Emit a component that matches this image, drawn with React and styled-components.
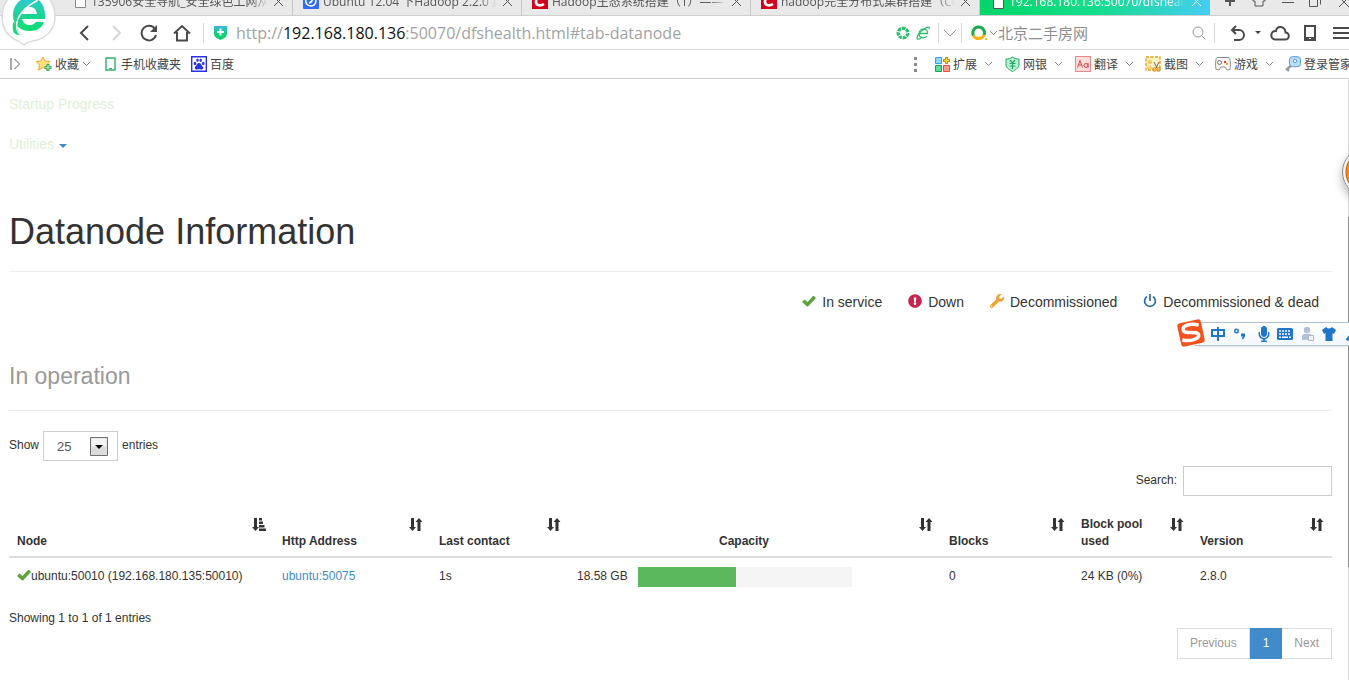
import React from 'react';
import styled, { createGlobalStyle, css } from 'styled-components';
import {
  FaExclamationCircle, FaWrench, FaMicrophone, FaTshirt, FaPaw,
} from 'react-icons/fa';

const uiFont = '"Open Sans", "Noto Sans CJK SC", sans-serif';
const pageFont = '"Liberation Sans", Arial, sans-serif';

const GlobalStyle = createGlobalStyle`
  *, *::before, *::after { box-sizing: border-box; }
  body { margin: 0; background: #fff; overflow: hidden; }
  button, input, select { font: inherit; color: inherit; margin: 0; }
  svg { display: block; flex: none; }
`;

const Window = styled.div`
  position: relative;
  display: flex;
  flex-direction: column;
  min-height: 100vh;
  overflow: hidden;
`;

const PlainButton = styled.button`
  display: flex;
  align-items: center;
  justify-content: center;
  flex: none;
  padding: 0;
  border: 0;
  background: none;
`;

/* ---------- browser chrome ---------- */

const Chrome = styled.header`
  font-family: ${uiFont};
  color: #555;
`;

const TabStrip = styled.div`
  display: flex;
  align-items: flex-end;
  height: 16px;
  padding-left: 64px;
  overflow: hidden;
  background: #e9e9e9;
  border-bottom: 1px solid #cfcfcf;
`;

const Tab = styled.div`
  display: flex;
  align-items: center;
  flex: 0 1 229px;
  min-width: 0;
  height: 28px;
  padding: 0 8px 0 10px;
  border-right: 1px solid #c8c8c8;
  font-size: 12px;
  ${(p) => p.$active && css`
    height: 29px;
    flex-basis: 230px;
    margin-bottom: -1px;
    padding-left: 12px;
    border: 0;
    color: #fff;
    background: linear-gradient(90deg, #05d568 0%, #14dd8a 50%, #45cdf3 100%);
  `}
`;

const TabTitle = styled.span`
  flex: 1;
  min-width: 0;
  margin: 0 5px 0 4px;
  overflow: hidden;
  white-space: nowrap;
  mask-image: linear-gradient(90deg, #000 90%, transparent);
`;

const WindowButtons = styled.div`
  display: flex;
  align-items: center;
  flex: 1;
  justify-content: space-between;
  height: 28px;
  padding: 0 0 0 14px;
`;

const Toolbar = styled.div`
  display: flex;
  align-items: center;
  height: 34px;
  padding-left: 67px;
  border-bottom: 1px solid #dcdcdc;
`;

const ToolButton = styled(PlainButton)`
  width: ${(p) => p.$w || 33}px;
  height: 32px;
`;

const Separator = styled.span`
  flex: none;
  width: 1px;
  height: 20px;
  margin-left: ${(p) => p.$gap || 0}px;
  background: #d9d9d9;
`;

const Address = styled.div`
  display: flex;
  align-items: center;
  flex: 1;
  min-width: 0;
  gap: 6px;
  padding: 0 8px 0 10px;
  white-space: nowrap;
`;

const Url = styled.span`
  flex: 1;
  min-width: 0;
  padding-left: 3px;
  overflow: hidden;
  font-size: 16px;
  line-height: 24px;
  color: #a3a3a3;
  b { font-weight: 400; color: #111; }
`;

const SearchBox = styled.form`
  display: flex;
  align-items: center;
  flex: 0 0 252px;
  min-width: 0;
  padding: 0 8px 0 9px;
`;

const SearchField = styled.input`
  flex: 1;
  min-width: 0;
  padding: 0;
  border: 0;
  background: none;
  font-size: 15px;
  line-height: 24px;
  &::placeholder { color: #8f8f8f; opacity: 1; }
`;

const Tools = styled.div`
  display: flex;
  flex: 0 0 134px;
  padding-left: 7px;
  overflow: hidden;
`;

const Bookmarks = styled.nav`
  display: flex;
  align-items: center;
  height: 29px;
  padding-left: 10px;
  border-bottom: 1px solid #cfcfcf;
  font-size: 12px;
  color: #444;
`;

const Bookmark = styled.a`
  display: flex;
  align-items: center;
  flex: none;
  gap: 3px;
  margin-left: ${(p) => p.$gap || 0}px;
  color: inherit;
  line-height: 18px;
  text-decoration: none;
  white-space: nowrap;
`;

const BookmarkLabel = styled.span`
  padding-top: 2px;
`;

const Extensions = styled.div`
  display: flex;
  flex: 0 0 414px;
  overflow: hidden;
`;

const Extension = styled(PlainButton)`
  justify-content: flex-start;
  width: 70px;
  gap: 3px;
  line-height: 18px;
  white-space: nowrap;
  svg:last-child { margin-left: 4px; }
`;

const DotsHandle = styled.span`
  margin: 0 17px 0 auto;
`;

const LogoBadge = styled.div`
  position: absolute;
  top: 0;
  left: 0;
`;

/* ---------- page ---------- */

const Viewport = styled.div`
  display: flex;
  flex: 1;
  font-family: ${pageFont};
  font-size: 12px;
  line-height: 17px;
  color: #333;
`;

const Page = styled.main`
  flex: 1;
  min-width: 0;
  padding: 5px 16px 0 9px;
`;

const ScrollTrack = styled.div`
  flex: none;
  width: 1px;
  padding-top: 138px;
  background: #dcdcdc;
`;

const ScrollThumb = styled.div`
  height: 350px;
  background: #8c8c8c;
`;

const NavLink = styled.a`
  display: flex;
  align-items: center;
  gap: 5px;
  height: 40px;
  font-size: 14px;
  line-height: 20px;
  color: #dff0d8;
  text-decoration: none;
  svg { margin-top: 4px; }
`;

const Title = styled.h1`
  margin: 48px 0 20px;
  padding-bottom: 19px;
  border-bottom: 1px solid #eee;
  font-size: 36px;
  font-weight: 400;
  line-height: 40px;
`;

const Subtitle = styled.h2`
  margin: 51px 0 20px;
  padding-bottom: 21px;
  border-bottom: 1px solid #eee;
  font-size: 23px;
  font-weight: 400;
  line-height: 26px;
  color: #999;
`;

const Legend = styled.ul`
  display: flex;
  justify-content: flex-end;
  gap: 26px;
  margin: 0;
  padding: 0 13px 0 0;
  list-style: none;
  font-size: 14px;
  line-height: 20px;
`;

const LegendItem = styled.li`
  display: flex;
  align-items: center;
  gap: 6px;
  svg { margin-bottom: 2px; color: ${(p) => p.$color}; }
`;

const LengthControl = styled.label`
  display: flex;
  align-items: center;
  gap: 4px;
`;

const SelectBox = styled.span`
  position: relative;
  svg {
    position: absolute;
    top: 6px;
    right: 10px;
    pointer-events: none;
  }
`;

const Select = styled.select`
  display: block;
  width: 75px;
  height: 30px;
  padding: 0 0 0 13px;
  appearance: none;
  border: 1px solid #ccc;
  border-radius: 0;
  background: #fff;
  font-size: 13px;
  color: #555;
`;

const ControlLabel = styled.span`
  padding-bottom: 2px;
`;

const FilterControl = styled.label`
  display: flex;
  align-items: center;
  justify-content: flex-end;
  gap: 6px;
  margin: 5px 0 12px;
`;

const FilterInput = styled.input`
  width: 149px;
  height: 30px;
  padding: 4px 8px;
  border: 1px solid #ccc;
  background: #fff;
`;

const Table = styled.table`
  width: 100%;
  table-layout: fixed;
  border-collapse: collapse;
`;

const Column = styled.col`
  width: ${(p) => (p.$w ? `${p.$w}px` : 'auto')};
`;

const HeadCell = styled.th`
  padding: 8px 8px 6px 8px;
  border-bottom: 2px solid #ddd;
`;

const SortButton = styled.button`
  display: flex;
  gap: 8px;
  width: 100%;
  min-height: 34px;
  padding: 0;
  border: 0;
  background: none;
  font-weight: 700;
  line-height: 17px;
  text-align: ${(p) => (p.$center ? 'center' : 'left')};
  span { flex: 1; align-self: flex-end; }
  svg { margin-top: 2px; }
`;

const Cell = styled.td`
  height: 38px;
  padding: 0 0 0 8px;
  white-space: nowrap;
`;

const NodeName = styled.span`
  display: flex;
  align-items: center;
  svg { margin-bottom: 4px; color: #5fa341; }
`;

const Link = styled.a`
  color: #428bca;
  text-decoration: none;
`;

const Capacity = styled.div`
  display: flex;
  align-items: center;
  gap: 10px;
`;

const Meter = styled.div`
  width: 214px;
  height: 20px;
  background: #f5f5f5;
`;

const MeterFill = styled.div`
  height: 100%;
  background: #5cb85c;
`;

const Info = styled.p`
  margin: 15px 0 1px;
`;

const Pager = styled.nav`
  display: flex;
  justify-content: flex-end;
`;

const PageButton = styled.button`
  height: 31px;
  padding: 0 12px;
  border: 1px solid #ddd;
  background: #fff;
  color: #999;
  & + & { border-left: 0; }
  ${(p) => p.$current && css`
    && { border: 1px solid #428bca; }
    background: #428bca;
    color: #fff;
  `}
`;

/* ---------- floating desktop widgets ---------- */

const FloatBall = styled.div`
  position: absolute;
  top: 147px;
  right: -43px;
  width: 50px;
  height: 50px;
  border: 1px solid #8a8a8a;
  border-radius: 50%;
  background: radial-gradient(circle, #ff8a14 20px, #b8641c 21px, #f3f3f3 22px);
  box-shadow: 0 5px 10px rgba(0, 0, 0, 0.3);
`;

const InputBar = styled.div`
  position: absolute;
  top: 322px;
  right: 0;
  display: flex;
  align-items: center;
  width: 154px;
  height: 24px;
  padding-left: 16px;
  border: solid #b3c2d1;
  border-width: 1px 0;
  background: linear-gradient(#fff, #f3f8fd);
  box-shadow: 0 1px 3px rgba(0, 0, 0, 0.12);
`;

const InputBarTools = styled.div`
  display: flex;
  align-items: center;
  overflow: hidden;
  color: #1f75c8;
`;

const InputLogo = styled.div`
  position: absolute;
  top: -5px;
  left: -19px;
`;

/* ---------- icons ---------- */

const Line = ({ w = 16, h = w, sw = 1, color = 'currentColor', d }) => (
  <svg width={w} height={h} viewBox={`0 0 ${w} ${h}`} fill="none" stroke={color} strokeWidth={sw}>
    <path d={d} />
  </svg>
);

const Chevron = ({ color = '#888' }) => <Line w={9} h={6} color={color} d="M1 1l3.5 3.5L8 1" />;
const CloseMark = () => <Line w={11} d="M1 1l9 9M10 1l-9 9" />;

const BrowserLogo = () => (
  <svg width="60" height="50" viewBox="0 0 60 50" fill="none">
    <defs>
      <linearGradient id="logo" gradientUnits="userSpaceOnUse" x1="0" y1="-3" x2="0" y2="36">
        <stop offset="0" stopColor="#35c6d6" />
        <stop offset="0.5" stopColor="#18d690" />
        <stop offset="1" stopColor="#10e068" />
      </linearGradient>
    </defs>
    <path
      d="M29-11C14-11 2 1 2 17c0 11 6 19 14 23 3 1 5 3 8 5 2-2 4-3 8-4 13-1 23-11 23-24C55 1 44-11 29-11z"
      fill="#fff" stroke="#dcdcdc" strokeWidth="1.5"
    />
    <path
      fill="url(#logo)" fillRule="evenodd"
      d="M45 19C46 5 39-3 30-3S13 5 13 15s7 16 17 16c7 0 12-3 14-9h-8c-2 2-3 3-6 3-4 0-7-2-8-6zM22 14c1-5 4-7 8-7s6 2 7 7z"
    />
    <path d="M36-2C22 5 13 15 14 31h4C14 19 22 8 36 0z" fill="url(#logo)" />
    <path d="M38 0C25 7 14 17 17 31" stroke="#fff" strokeWidth="1.5" />
    <path d="M13 22c-1 8 0 14 8 13-4-1-5-5-5-10z" fill="url(#logo)" />
  </svg>
);

const PageIcon = ({ color = '#8a8a8a' }) => (
  <svg width="13" height="14" viewBox="0 0 13 14">
    <path d="M1.5.5h10v13h-10z" fill="#fff" stroke={color} />
  </svg>
);

const CsdnIcon = () => (
  <svg width="16" height="16" viewBox="0 0 16 16">
    <path d="M0 0h16v16H0z" fill="#d0021b" />
    <path d="M12 5C6 2 4 6 4 9c0 4 5 4 8 2" fill="none" stroke="#fff" strokeWidth="2.6" />
  </svg>
);

const SwirlIcon = () => (
  <svg width="16" height="16" viewBox="0 0 16 16" fill="none">
    <rect width="16" height="16" rx="1" fill="#2f6bf0" />
    <path d="M3 5c-1 5 1 8 5 8s6-4 4-8M7 5c3 0 3 4-1 5" stroke="#fff" strokeWidth="1.6" />
  </svg>
);

const ShieldPlus = () => (
  <svg width="13" height="15" viewBox="0 0 13 15">
    <defs>
      <linearGradient id="shield" x1="0" y1="0" x2="0" y2="1">
        <stop offset="0" stopColor="#37b9e3" />
        <stop offset="0.6" stopColor="#10cf70" />
      </linearGradient>
    </defs>
    <path d="M0 1h13v8c0 3-4 5-6.5 6C4 14 0 12 0 9z" fill="url(#shield)" />
    <path d="M6.500 3.500v7M3 7h7" stroke="#fff" strokeWidth="2" />
  </svg>
);

const Aperture = () => (
  <svg width="14" height="14" viewBox="0 0 14 14" fill="none" stroke="#2fbf6b">
    <circle cx="7" cy="7" r="4.8" strokeWidth="3.4" />
    <path d="M5 0l1 5M11 1L8.500 5M14 6L9 7.500M12 12L8.500 9M6 14l.5-5M1 11l4.500-2.500M0 5l5 1.500" stroke="#fff" />
  </svg>
);

const SmallE = () => (
  <svg width="14" height="14" viewBox="0 0 14 14" fill="none" stroke="#2fbf6b" strokeWidth="1.3">
    <path d="M3.500 7.500h8C12 4.500 10 3 7.500 3 4.500 3 3 5.500 3 8c0 4 6 5 8 2" />
    <path d="M13 3c1-3-2-2-5 0C4 5.500 1 10 1 12c0 2 3 1 4 0" />
  </svg>
);

const RingLogo = () => (
  <svg width="18" height="16" viewBox="0 0 18 16" fill="none" strokeWidth="3">
    <path d="M2.500 10.500A5.800 5.800 0 1 1 13 10" stroke="#1aa94c" />
    <path d="M2.500 10.500A5.800 5.800 0 0 0 13 10" stroke="#f7b512" />
    <path d="M14 14h2" stroke="#f7b512" strokeWidth="2" />
  </svg>
);

const StarIcon = () => (
  <svg width="16" height="16" viewBox="0 0 16 16">
    <path d="M7 1l2 4 5 .5-3.500 3.500 1 5L7 11.500 2.500 14l1-5L0 5.500 5 5z" fill="#ffe07a" stroke="#eda93a" />
    <path d="M12 8v7M8.500 11.500h7" stroke="#3fae63" strokeWidth="3" />
    <path d="M12 9v5M9.500 11.500h5" stroke="#a9e6bd" />
  </svg>
);

const BaiduIcon = () => (
  <svg width="16" height="16" viewBox="0 0 16 16" fill="none">
    <path d="M.7.7h14.600v14.600H.7z" fill="#fff" stroke="#2932e1" strokeWidth="1.4" />
    <g fill="#2932e1">
      <ellipse cx="4" cy="7.500" rx="1.300" ry="1.700" />
      <ellipse cx="6.500" cy="4.200" rx="1.200" ry="1.700" />
      <ellipse cx="9.700" cy="4.200" rx="1.200" ry="1.700" />
      <ellipse cx="12.200" cy="7.500" rx="1.300" ry="1.700" />
      <path d="M8 7c2 0 2 2 3.500 3.300 1.500 1.500.5 3.400-1.500 3.200-1.500-.3-2.500-.3-4 0-2 .2-3-1.700-1.500-3.200C6 9 6 7 8 7z" />
    </g>
  </svg>
);

const ExtendIcon = () => (
  <svg width="15" height="15" viewBox="0 0 15 15">
    <path d="M.5.5h6v6h-6z" fill="#8fd6f8" stroke="#3a9ff0" />
    <path d="M.5 8.500h6v6h-6z" fill="#5ede9a" stroke="#16a04e" />
    <path d="M8.500 8.500h6v6h-6z" fill="#ff9c90" stroke="#ee4b41" />
    <path d="M11.500 0v7M8 3.500h7" stroke="#d98a0b" strokeWidth="3" />
    <path d="M11.500 1v5M9 3.500h5" stroke="#ffdf3d" />
  </svg>
);

const BankIcon = () => (
  <svg width="15" height="16" viewBox="0 0 15 16" fill="none" stroke="#25a767">
    <path d="M7.500 1c2 1.500 4 2 6.500 2v6c0 3-4 5-6.500 6.500C5 14 1 12 1 9V3c2.500 0 4.500-.5 6.500-2z" fill="#b8f4d2" />
    <path d="M5 4l2.500 3L10 4M7.500 7v6M4.500 7.500h6M4.500 10h6" strokeWidth="1.2" />
  </svg>
);

const TranslateIcon = () => (
  <svg width="16" height="16" viewBox="0 0 16 16" fill="none" stroke="#d5484d">
    <rect x="0.5" y="0.5" width="15" height="15" fill="#fddcda" stroke="#e58a88" />
    <path d="M2.500 11.500L5 4.500l2.500 7M3.500 9h3M13 7v5" />
    <circle cx="11" cy="9.500" r="2" />
  </svg>
);

const CaptureIcon = () => (
  <svg width="16" height="16" viewBox="0 0 16 16" fill="none">
    <path d="M1 1h14v13H1z" fill="#fff3c8" stroke="#eb9d1b" strokeWidth="1.4" strokeDasharray="3 1.5" />
    <circle cx="5" cy="6" r="2" fill="#f6c84c" />
    <path d="M1 13c1-5 6-5 7 0z" fill="#f6d27a" />
    <path d="M9 6l3 6M14 6l-3 6" stroke="#7c6a4a" />
    <circle cx="9.500" cy="13.500" r="1.800" stroke="#d9820f" />
    <circle cx="13.500" cy="13.500" r="1.800" stroke="#d9820f" />
  </svg>
);

const GameIcon = () => (
  <svg width="16" height="14" viewBox="0 0 16 14" fill="none">
    <path d="M2 .5h12c2 2 1.500 9 1 12l-3 .5-2-3H6l-2 3-3-.5C.5 9.500 0 2.500 2 .5z" fill="#f5f5f5" stroke="#8d8d8d" />
    <circle cx="4.500" cy="5.500" r="2" stroke="#777" />
    <path d="M9 4h2v2H9z" fill="#e33" />
    <path d="M11 6h2v2h-2z" fill="#f3a512" />
  </svg>
);

const KeyIcon = () => (
  <svg width="16" height="16" viewBox="0 0 16 16" fill="none">
    <path d="M7 9l-6 5M2 13l2 2" stroke="#999" strokeWidth="2.4" />
    <rect x="4.500" y="0.700" width="11" height="10" rx="3" fill="#b8e0fb" stroke="#5b98cf" />
    <circle cx="10" cy="5" r="1.700" fill="#fff" stroke="#5b98cf" />
  </svg>
);

const CheckIcon = () => (
  <svg width="14" height="12" viewBox="0 0 14 12">
    <path d="M0 7l2.500-2.500L5.500 7l5.500-6h1l2 2-8 8.500H5z" fill="currentColor" />
  </svg>
);

const PowerIcon = () => (
  <svg width="14" height="14" viewBox="0 0 14 14" fill="none" stroke="currentColor" strokeWidth="1.7">
    <path d="M4 2.500a5.400 5.400 0 1 0 6 0M7 0v7" />
  </svg>
);

const SortBoth = () => (
  <svg width="14" height="13" viewBox="0 0 14 13" fill="#333">
    <path d="M2 0h3v9h2l-3.500 4L0 9h2z" />
    <path d="M8.500 13h3V4h2L10 0 6.500 4h2z" />
  </svg>
);

const SortAscending = () => (
  <svg width="14" height="13" viewBox="0 0 14 13" fill="#333">
    <path d="M2 0h3v9h2l-3.500 4L0 9h2z" />
    <path d="M7 0h3v2.500H7zM7 3.500h4V6H7zM7 7h5.500v2.500H7zM7 10.500h7V13H7z" />
  </svg>
);

const DropArrow = () => (
  <svg width="18" height="19" viewBox="0 0 18 19">
    <path d="M.5.5h17v18H.5z" fill="#dcdcdc" stroke="#6f6f6f" />
    <path d="M1.500 1.500h15v8h-15z" fill="#f4f4f4" />
    <path d="M5 8h8l-4 4z" fill="#000" />
  </svg>
);

const extensions = [
  ['扩展', ExtendIcon], ['网银', BankIcon], ['翻译', TranslateIcon],
  ['截图', CaptureIcon], ['游戏', GameIcon], ['登录管家', KeyIcon],
];

const tabs = [
  ['135906安全导航_安全绿色上网从', PageIcon],
  ['Ubuntu 12.04 下Hadoop 2.2.0 集群', SwirlIcon],
  ['Hadoop生态系统搭建（1）——', CsdnIcon],
  ['hadoop完全分布式集群搭建（Ce', CsdnIcon],
];

const columns = [
  { label: 'Node', width: 265 },
  { label: 'Http Address', width: 157 },
  { label: 'Last contact', width: 138 },
  { label: 'Capacity' },
  { label: 'Blocks', width: 132 },
  { label: 'Block pool used', width: 119 },
  { label: 'Version', width: 140 },
];

const nodes = [
  {
    name: 'ubuntu:50010 (192.168.180.135:50010)', http: 'ubuntu:50075', contact: '1s',
    capacity: '18.58 GB', used: 46, blocks: '0', pool: '24 KB (0%)', version: '2.8.0',
  },
];

function BrowserChrome() {
  return (
    <Chrome>
      <TabStrip>
        {tabs.map(([title, Icon]) => (
          <Tab key={title}>
            <Icon />
            <TabTitle>{title}</TabTitle>
            <PlainButton aria-label="Close tab"><CloseMark /></PlainButton>
          </Tab>
        ))}
        <Tab $active>
          <PageIcon color="#555" />
          <TabTitle>192.168.180.136:50070/dfshealth</TabTitle>
          <PlainButton aria-label="Close tab"><CloseMark /></PlainButton>
        </Tab>
        <WindowButtons>
          <PlainButton aria-label="New tab"><Line w={12} sw={2} d="M6 1v10M1 6h10" /></PlainButton>
          <PlainButton aria-label="Skin"><Line w={14} d="M4 1L1 4v3h2v5h8V7h2V4l-3-3" /></PlainButton>
          <PlainButton aria-label="Minimize"><Line w={12} h={6} d="M0 4.500h12" /></PlainButton>
          <PlainButton aria-label="Restore"><Line w={13} d="M.5 3.500h8v8h-8zM3 1.500h8.500v8" /></PlainButton>
          <PlainButton aria-label="Close"><Line w={11} d="M1 1l10 10M11 1L1 11" /></PlainButton>
        </WindowButtons>
      </TabStrip>

      <Toolbar>
        <ToolButton aria-label="Back"><Line w={10} h={16} sw={2} color="#4a4a4a" d="M9 1L2 8l7 7" /></ToolButton>
        <ToolButton aria-label="Forward"><Line w={10} h={16} sw={2} color="#d5d5d5" d="M1 1l7 7-7 7" /></ToolButton>
        <ToolButton $w={31} aria-label="Reload">
          <svg width="18" height="18" viewBox="0 0 18 18" fill="none">
            <path d="M15 5A7.300 7.300 0 1 0 16 11" stroke="#4a4a4a" strokeWidth="2" />
            <path d="M17 1v7h-7z" fill="#4a4a4a" />
          </svg>
        </ToolButton>
        <ToolButton $w={36} aria-label="Home"><Line w={18} sw={2} color="#4a4a4a" d="M1 9.500L9 2l8 7.500M4 8v8.500h10V8" /></ToolButton>
        <Separator $gap={3} />
        <Address>
          <ShieldPlus />
          <Url>http://<b>192.168.180.136</b>:50070/dfshealth.html#tab-datanode</Url>
          <Aperture />
          <SmallE />
        </Address>
        <Separator />
        <ToolButton $w={22} aria-label="Address history"><Line w={14} h={8} color="#999" d="M1 1l6 6 6-6" /></ToolButton>
        <Separator />
        <SearchBox>
          <RingLogo />
          <Chevron />
          <SearchField aria-label="Web search" placeholder="北京二手房网" />
          <Line w={14} color="#999" d="M11 6A5 5 0 1 1 1 6a5 5 0 0 1 10 0M9.500 9.500l4 4" />
        </SearchBox>
        <Separator />
        <Tools>
          <ToolButton $w={32} aria-label="Undo">
            <Line w={16} sw={2} color="#4a4a4a" d="M6 1L2 5l4 4M2 5h7a4.800 4.800 0 0 1 0 10H4" />
          </ToolButton>
          <ToolButton $w={8} aria-label="Closed tabs">
            <svg width="6" height="3"><path d="M0 0h6L3 3z" fill="#444" /></svg>
          </ToolButton>
          <ToolButton $w={36} aria-label="Cloud">
            <Line w={20} h={16} sw={2} color="#4a4a4a" d="M5 14.500h10c5 0 5-7 .5-7C15 1 7 0 6 6c-5-1-7 8-1 8.500z" />
          </ToolButton>
          <ToolButton $w={24} aria-label="Phone">
            <svg width="12" height="16" viewBox="0 0 12 16">
              <path d="M1 1h10v14H1z" fill="#fff" stroke="#4a4a4a" strokeWidth="2" />
              <path d="M1 12h10v3H1z" fill="#4a4a4a" /><path d="M5 13h2v1H5z" fill="#fff" />
            </svg>
          </ToolButton>
          <ToolButton $w={38} aria-label="Menu"><Line w={16} h={12} sw={2} color="#4a4a4a" d="M0 1h16M0 6h16M0 11h16" /></ToolButton>
        </Tools>
      </Toolbar>

      <Bookmarks>
        <Line w={11} h={12} color="#555" d="M1 0v12M4.500 1l5 5-5 5" />
        <Bookmark href="#favorites" $gap={15}><StarIcon /><BookmarkLabel>收藏</BookmarkLabel><Chevron /></Bookmark>
        <Bookmark href="#mobile" $gap={14}>
          <svg width="13" height="14" viewBox="0 0 13 14" fill="none">
            <path d="M1 1h9v12H1z" stroke="#2fb36a" strokeWidth="1.4" /><path d="M4 11.500h3" stroke="#2fb36a" />
          </svg>
          <BookmarkLabel>手机收藏夹</BookmarkLabel>
        </Bookmark>
        <Bookmark href="#baidu" $gap={10}><BaiduIcon /><BookmarkLabel>百度</BookmarkLabel></Bookmark>
        <DotsHandle>
          <svg width="4" height="16" fill="#888">
            <path d="M0 1h3v3H0zM0 7h3v3H0zM0 13h3v3H0z" />
          </svg>
        </DotsHandle>
        <Extensions>
          {extensions.map(([label, Icon]) => (
            <Extension key={label}><Icon /><BookmarkLabel>{label}</BookmarkLabel><Chevron /></Extension>
          ))}
        </Extensions>
      </Bookmarks>
      <LogoBadge><BrowserLogo /></LogoBadge>
    </Chrome>
  );
}

function DatanodeTable() {
  return (
    <Table>
      <colgroup>
        {columns.map((c) => <Column key={c.label} $w={c.width} />)}
      </colgroup>
      <thead>
        <tr>
          {columns.map((c, i) => (
            <HeadCell key={c.label} scope="col">
              <SortButton $center={c.label === 'Capacity'}>
                <span>{c.label}</span>
                {i === 0 ? <SortAscending /> : <SortBoth />}
              </SortButton>
            </HeadCell>
          ))}
        </tr>
      </thead>
      <tbody>
        {nodes.map((n) => (
          <tr key={n.name}>
            <Cell><NodeName><CheckIcon />{n.name}</NodeName></Cell>
            <Cell><Link href="#node">{n.http}</Link></Cell>
            <Cell>{n.contact}</Cell>
            <Cell>
              <Capacity>
                {n.capacity}
                <Meter><MeterFill style={{ width: `${n.used}%` }} /></Meter>
              </Capacity>
            </Cell>
            <Cell>{n.blocks}</Cell>
            <Cell>{n.pool}</Cell>
            <Cell>{n.version}</Cell>
          </tr>
        ))}
      </tbody>
    </Table>
  );
}

function InputMethodBar() {
  return (
    <InputBar>
      <InputLogo>
        <svg width="30" height="30" viewBox="0 0 30 30" fill="none">
          <g transform="rotate(-12 15 15)">
            <rect x="3" y="3" width="24" height="24" rx="3" fill="#f4511e" />
            <path d="M24 9C17 5 8 6 8 10.500c0 5 14 3 14 8 0 4-9 5-17 1.500" stroke="#fff" strokeWidth="3.6" />
          </g>
        </svg>
      </InputLogo>
      <InputBarTools>
        <svg width="22" height="16" viewBox="0 0 22 16" fill="none" stroke="currentColor" strokeWidth="2">
          <path d="M1 4h12v6H1zM7 1v14" />
        </svg>
        <svg width="23" height="16" viewBox="0 0 23 16" fill="none">
          <circle cx="3.500" cy="5" r="1.800" stroke="currentColor" strokeWidth="1.4" />
          <path d="M8 7.500h4c.5 3-.5 5-3 6v-1.500l1-1.500H8z" fill="currentColor" />
        </svg>
        <FaMicrophone size={16} />
        <svg width="26" height="16" viewBox="-5 0 26 16">
          <rect x="0" y="2" width="16" height="12" rx="1.5" fill="currentColor" />
          <path d="M2 5h12M2 8h12" stroke="#fff" strokeWidth="1.6" strokeDasharray="2 1" />
          <path d="M2 11.300h2M5 11.300h6M12 11.300h2" stroke="#fff" strokeWidth="1.6" />
        </svg>
        <svg width="20" height="16" viewBox="-3 0 20 16" fill="#b4c1d6">
          <circle cx="6" cy="4" r="3.2" />
          <path d="M1 14V10c0-3 10-3 10 0v4z" />
          <path d="M7.500 9.500h5v5h-5z" fill="#fff" stroke="#a9b8cd" />
          <path d="M9.500 11h1v1h-1zM9.500 13h1v1h-1z" />
        </svg>
        <svg width="22" height="16" viewBox="-4 0 22 16">
          <path d="M4 1c2 2 4 2 6 0l4 3-2 4-1.500-1v8h-7V7L2 8 0 4z" fill="currentColor" />
        </svg>
        <svg width="18" height="16" viewBox="-5 0 18 16">
          <path d="M1 13l7-8c-1-3 1-5 4-4v10L5 14c-2 1-4 1-4-1z" fill="currentColor" />
        </svg>
      </InputBarTools>
    </InputBar>
  );
}

export default function App() {
  return (
    <Window>
      <GlobalStyle />
      <BrowserChrome />
      <Viewport>
        <Page>
          <nav>
            <NavLink href="#tab-startup-progress">Startup Progress</NavLink>
            <NavLink href="#utilities">
              Utilities
              <svg width="8" height="4"><path d="M0 0h8L4 4z" fill="#428bca" /></svg>
            </NavLink>
          </nav>
          <Title>Datanode Information</Title>
          <Legend>
            <LegendItem $color="#5fa341"><CheckIcon />In service</LegendItem>
            <LegendItem $color="#c7254e"><FaExclamationCircle size={14} />Down</LegendItem>
            <LegendItem $color="#eea236"><FaWrench size={14} />Decommissioned</LegendItem>
            <LegendItem $color="#2e6da4"><PowerIcon />Decommissioned &amp; dead</LegendItem>
          </Legend>
          <Subtitle>In operation</Subtitle>
          <LengthControl>
            <ControlLabel>Show</ControlLabel>
            <SelectBox>
              <Select defaultValue="25">
                <option>25</option>
                <option>50</option>
                <option>100</option>
              </Select>
              <DropArrow />
            </SelectBox>
            <ControlLabel>entries</ControlLabel>
          </LengthControl>
          <FilterControl>
            <ControlLabel>Search:</ControlLabel>
            <FilterInput type="search" />
          </FilterControl>
          <DatanodeTable />
          <Info>Showing 1 to 1 of 1 entries</Info>
          <Pager aria-label="Table pages">
            <PageButton>Previous</PageButton>
            <PageButton $current>1</PageButton>
            <PageButton>Next</PageButton>
          </Pager>
        </Page>
        <ScrollTrack><ScrollThumb /></ScrollTrack>
      </Viewport>
      <FloatBall />
      <InputMethodBar />
    </Window>
  );
}
